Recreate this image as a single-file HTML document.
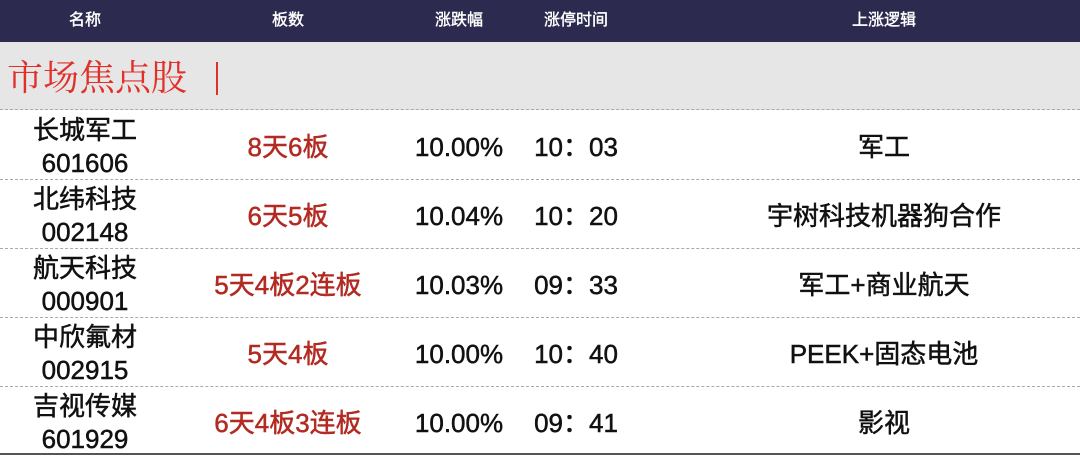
<!DOCTYPE html>
<html><head><meta charset="utf-8"><style>
*{margin:0;padding:0;box-sizing:border-box}
body{width:1080px;height:455px;overflow:hidden;background:#fff;font-family:"Liberation Sans","Noto Sans CJK SC",sans-serif;position:relative}
.hd{position:absolute;left:0;top:0;width:1080px;height:42px;background:#2c2a4e;color:#fff;font-size:16px;-webkit-text-stroke:0.4px #fff}
.hd span{position:absolute;top:0;line-height:42px;transform:translateX(-50%);white-space:nowrap}
.band{position:absolute;left:0;top:42px;width:1080px;height:68px;background:#e6e6e6;border-bottom:1px dashed #aaa}
.band .t{position:absolute;left:7px;top:14px;font-family:"Liberation Serif","Noto Serif CJK SC",serif;font-size:36px;line-height:44px;color:#e0302a}
.band .bar{position:absolute;left:216px;top:20px;width:2px;height:33px;background:#e0302a}
.row{position:absolute;left:0;width:1080px;height:69px;border-bottom:1px dashed #aaa;font-size:26px;color:#111;-webkit-text-stroke:0.5px #111}
.row span{position:absolute;transform:translateX(-50%);white-space:nowrap}
.nm{top:3px;text-align:center;line-height:33px}
.c{top:0;line-height:72px}
.r{color:#b22a22;-webkit-text-stroke:0.5px #b22a22}
.last{border-bottom:2px solid #555}
</style></head><body>
<div class="hd"><span style="left:85px">名称</span><span style="left:288px">板数</span><span style="left:459px">涨跌幅</span><span style="left:576px">涨停时间</span><span style="left:884px">上涨逻辑</span></div>
<div class="band"><div class="t">市场焦点股</div><div class="bar"></div></div>

<div class="row" style="top:111px"><span class="nm" style="left:85px">长城军工<br>601606</span><span class="c r" style="left:288px">8天6板</span><span class="c" style="left:459px">10.00%</span><span class="c" style="left:576px">10：03</span><span class="c" style="left:884px">军工</span></div>
<div class="row" style="top:180px"><span class="nm" style="left:85px">北纬科技<br>002148</span><span class="c r" style="left:288px">6天5板</span><span class="c" style="left:459px">10.04%</span><span class="c" style="left:576px">10：20</span><span class="c" style="left:884px">宇树科技机器狗合作</span></div>
<div class="row" style="top:249px"><span class="nm" style="left:85px">航天科技<br>000901</span><span class="c r" style="left:288px">5天4板2连板</span><span class="c" style="left:459px">10.03%</span><span class="c" style="left:576px">09：33</span><span class="c" style="left:884px">军工+商业航天</span></div>
<div class="row" style="top:318px"><span class="nm" style="left:85px">中欣氟材<br>002915</span><span class="c r" style="left:288px">5天4板</span><span class="c" style="left:459px">10.00%</span><span class="c" style="left:576px">10：40</span><span class="c" style="left:884px">PEEK+固态电池</span></div>
<div class="row last" style="top:387px;height:68px"><span class="nm" style="left:85px">吉视传媒<br>601929</span><span class="c r" style="left:288px">6天4板3连板</span><span class="c" style="left:459px">10.00%</span><span class="c" style="left:576px">09：41</span><span class="c" style="left:884px">影视</span></div>
</body></html>
